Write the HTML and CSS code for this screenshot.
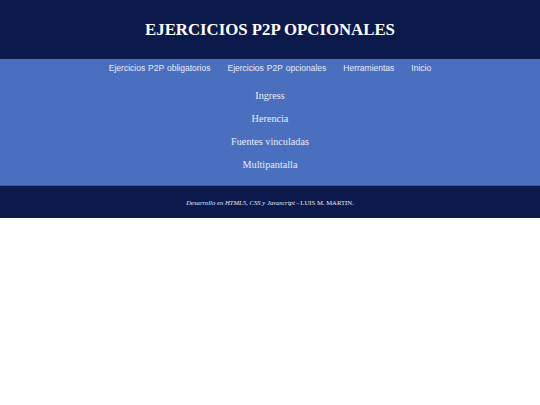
FILE: index.html
```
<!DOCTYPE html>
<html lang="es">
<head>
<meta charset="utf-8">
<title>Ejercicios P2P opcionales</title>
<link rel="stylesheet" href="styles.css">
</head>
<body>
<header class="top">
  <h1 class="title">EJERCICIOS P2P OPCIONALES</h1>
</header>
<div class="band">
  <nav class="menu">
    <a href="#">Ejercicios P2P obligatorios</a>
    <a href="#">Ejercicios P2P opcionales</a>
    <a href="#">Herramientas</a>
    <a href="#">Inicio</a>
  </nav>
  <ul class="list">
    <li><a href="#">Ingress</a></li>
    <li><a href="#">Herencia</a></li>
    <li><a href="#">Fuentes vinculadas</a></li>
    <li><a href="#">Multipantalla</a></li>
  </ul>
</div>
<footer class="foot">
  <p><em>Desarrollo en HTML5, CSS y Javascript</em> - LUIS M. MARTIN.</p>
</footer>
</body>
</html>
```
FILE: styles.css
```
html, body {
  margin: 0;
  padding: 0;
  background: #ffffff;
}
body {
  font-family: "Liberation Serif", serif;
}
.top {
  background: #0b1a4b;
  height: 59px;
  display: flex;
  align-items: center;
  justify-content: center;
}
.title {
  margin: 0;
  color: #ffffff;
  font-size: 16.8px;
  font-weight: bold;
}
.band {
  background: #4a6fbf;
  height: 126px;
  display: flex;
  flex-direction: column;
  align-items: center;
}
.menu {
  display: flex;
  gap: 17px;
  padding-top: 1px;
  height: 15px;
  align-items: center;
  font-family: "Liberation Sans", sans-serif;
  font-size: 8.5px;
  word-spacing: 0.6px;
}
.menu a {
  color: #e8ecf6;
  text-decoration: none;
}
.list {
  list-style: none;
  margin: 0;
  padding: 0;
  padding-top: 14px;
  display: flex;
  flex-direction: column;
  align-items: center;
  gap: 9px;
}
.list li {
  font-size: 10.2px;
  line-height: 14px;
}
.list a {
  color: #e8ecf6;
  text-decoration: none;
}
.foot {
  background: #0b1a4b;
  height: 33px;
  display: flex;
  align-items: center;
  justify-content: center;
  border-top: 1px solid #3f5a9c;
  box-sizing: border-box;
}
.foot p {
  margin: 0;
  color: #e8ecf6;
  font-size: 6.7px;
}
```
